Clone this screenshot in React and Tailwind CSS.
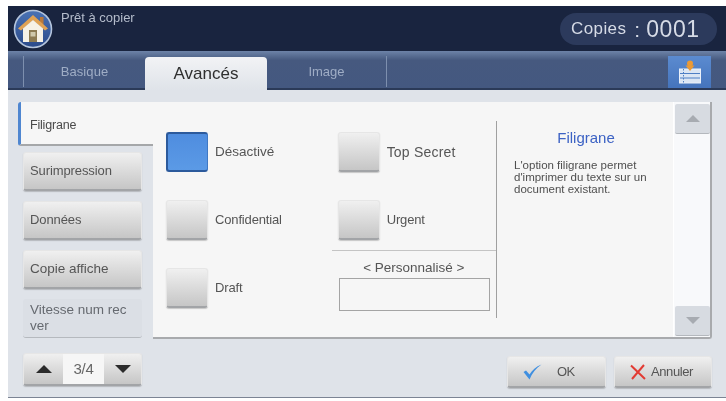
const FONT = "font-['Liberation_Sans',Arial,sans-serif]";
const btn = "bg-gradient-to-b from-[#f0f0f0] to-[#c6c6c6] border border-[#e6e6e6] border-b-[2px] border-b-[#a2a4a7] rounded-[3px] shadow-[0_1px_1px_rgba(90,90,90,0.3)]";

function Home() {
  return (
    <svg width="40" height="40" viewBox="0 0 40 40">
      <defs>
        <linearGradient id="hb" x1="0" y1="0" x2="0" y2="1">
          <stop offset="0" stopColor="#4a72b4" />
          <stop offset="1" stopColor="#2b4a8a" />
        </linearGradient>
      </defs>
      <circle cx="20" cy="20" r="18.5" fill="url(#hb)" stroke="#b4c4dc" strokeWidth="1.6" />
      <path d="M27 8h3.5v8l-3.5-3z" fill="#b9783a" />
      <path d="M20 6 L35 19.5 L32 21.5 L20 11.5 L8 21.5 L5 19.5 Z" fill="#e0a254" />
      <path d="M20 11 L30 19.5 V33 H10 V19.5 Z" fill="#f6f1e6" />
      <rect x="16" y="21" width="8" height="12" fill="#8c7a52" />
      <rect x="17.5" y="23" width="5" height="4.5" fill="#cfc8ab" />
    </svg>
  );
}

function Tray() {
  return (
    <svg width="24" height="24" viewBox="0 0 24 24">
      <rect x="1.5" y="9" width="21" height="14" fill="#dbe6f4" stroke="#eaf1fa" strokeWidth="1" />
      <path d="M2 13.5h20M2 18h20" stroke="#4f7fc4" strokeWidth="1.2" />
      <path d="M5.5 9v14" stroke="#4f7fc4" strokeWidth="1" strokeDasharray="1.5 1.5" />
      <circle cx="12" cy="3.5" r="3" fill="#eb9a35" />
      <path d="M7.5 5.5h9L12 11z" fill="#eb9a35" />
    </svg>
  );
}

function Option({ label, active, className = "", textClass = "text-[13px] tracking-[-0.15px]" }) {
  return (
    <div className={`flex items-center ${className}`}>
      <div
        className={
          active
            ? "w-[42px] h-[40px] rounded-[3px] bg-gradient-to-b from-[#4f8ddf] to-[#5b9ae6] border-[2px] border-[#2c5a9c] border-r-[#3f78c4] border-r-[1px]"
            : `w-[42px] h-[40px] ${btn}`
        }
      />
      <span className={`ml-[7px] text-[#555] ${textClass}`}>{label}</span>
    </div>
  );
}

function SideButton({ children, textClass = "text-[13px] tracking-[-0.1px]" }) {
  return (
    <div className={`w-[119px] h-[39px] flex items-center pl-[6px] text-[#555] ${textClass} ${btn}`}>
      {children}
    </div>
  );
}

export default function App() {
  return (
    <div className={`w-[726px] h-[401px] bg-white pt-[6px] pl-[8px] overflow-hidden flex flex-col [filter:blur(0.35px)] ${FONT}`}>
      {/* header */}
      <div className="h-[45px] shrink-0 bg-[#19243f] flex items-start justify-between pl-[5px] pr-[9px]">
        <div className="flex items-start pt-[3px]">
          <Home />
          <span className="ml-[8px] mt-[1px] text-[13px] leading-[16px] text-[#b4bccb]">Prêt à copier</span>
        </div>
        <div className="mt-[7px] w-[157px] h-[32px] rounded-full bg-[#2c3a5c] flex items-center pl-[11px] text-[#d6dbe6]">
          <span className="text-[17px] tracking-[0.4px]">Copies</span>
          <span className="text-[21px] ml-[8px] mr-[6px] leading-none">:</span>
          <span className="text-[23px] font-light tracking-[0.6px]">0001</span>
        </div>
      </div>

      {/* tab bar */}
      <div className="h-[39px] shrink-0 bg-gradient-to-b from-[#6d83a8] via-[#46597f] via-[25%] to-[#445880] border-b-[2px] border-b-[#2b3a58] flex items-stretch relative pt-[4px]">
        <div className="w-[16px] border-r border-r-[#7d8fae] my-[1px]" />
        <div className="w-[121px] flex items-center justify-center text-[13px] tracking-[0.1px] text-[#9fadc5]">Basique</div>
        <div className="w-[122px] -mb-[2px] mt-[2px] rounded-t-[4px] bg-gradient-to-b from-[#f2f3f5] to-[#dfe3e9] flex items-center justify-center text-[17px] text-[#2f2f2f]">
          Avancés
        </div>
        <div className="w-[119px] flex items-center justify-center text-[13px] text-[#9fadc5]">Image</div>
        <div className="border-r border-r-[#7d8fae] my-[1px]" />
        <div className="flex-1 flex justify-end pr-[15px]">
          <div className="w-[43px] h-[32px] mt-[1px] bg-gradient-to-b from-[#5b8bd0] to-[#4574bc] flex items-center justify-center">
            <Tray />
          </div>
        </div>
      </div>

      {/* body */}
      <div className="h-[308px] shrink-0 bg-[#dfe3e9] border-b border-b-[#7c8494] flex flex-col pl-[10px] pr-[14px] pt-[12px]">
        <div className="flex items-start h-[237px]">
          <div className="w-[135px] shrink-0 flex flex-col">
            <div className="h-[44px] bg-[#f6f6f6] border-l-[3px] border-l-[#4f86d0] border-b-[2px] border-b-[#a5a7a9] rounded-l-[3px] flex items-center pl-[9px] pt-[5px] text-[12.5px] tracking-[-0.2px] text-[#4a4a4a]">
              Filigrane
            </div>
            <div className="ml-[5px] mt-[6px] flex flex-col gap-[10px]">
              <SideButton>Surimpression</SideButton>
              <SideButton>Données</SideButton>
              <SideButton textClass="text-[13.5px]">Copie affiche</SideButton>
              <div className="w-[119px] h-[39px] bg-[#dbdfe5] border-b border-b-[#b5b9be] rounded-[3px] pl-[7px] pt-[3px] text-[13.5px] leading-[16px] text-[#666a70]">
                Vitesse num rec ver
              </div>
            </div>
          </div>

          {/* panel */}
          <div className="w-[559px] h-[237px] bg-[#f6f6f6] border-r-[2px] border-r-[#a8aaad] border-b-[2px] border-b-[#a8aaad] rounded-br-[3px] flex">
            <div className="w-[343px] shrink-0 relative flex pt-[30px]">
              <div className="ml-[13px] w-[131px] flex flex-col gap-[28px]">
                <Option label="Désactivé" active textClass="text-[13.5px] tracking-[0px]" />
                <Option label="Confidential" />
                <Option label="Draft" />
              </div>
              <div className="ml-[42px] w-[160px] flex flex-col">
                <Option label="Top Secret" textClass="text-[14px] tracking-[0.2px]" />
                <Option label="Urgent" className="mt-[28px]" />
                <div className="-ml-[6px] mt-[10px] border-t border-t-[#c4c4c4] pt-[9px] flex flex-col items-center">
                  <span className="text-[13.5px] tracking-[0px] text-[#555] leading-[15px]">&lt; Personnalisé &gt;</span>
                  <div className="mt-[3px] ml-[2px] w-[151px] h-[33px] border border-[#a4a4a4] bg-[#f6f6f6]" />
                </div>
              </div>
            </div>
            <div className="mt-[19px] h-[197px] border-l border-l-[#a0a0a0]" />
            <div className="w-[176px] shrink-0 flex flex-col pt-[27px]">
              <div className="text-center text-[15px] leading-[17px] text-[#3c62c4] pl-[2px]">Filigrane</div>
              <p className="ml-[17px] mt-[13px] w-[150px] text-[11.5px] leading-[12px] text-[#4f4f4f]">
                L'option filigrane permet d'imprimer du texte sur un document existant.
              </p>
            </div>
            <div className="flex-1 border-l border-l-[#ffffff] flex flex-col justify-between items-center bg-[#f8f9fb] pt-[2px] pb-[1px] pl-[1px]">
              <div className="w-[35px] h-[30px] bg-[#d7dbe1] border-b border-b-[#b4b8bd] rounded-[2px] flex items-center justify-center">
                <div className="w-0 h-0 border-l-[7px] border-r-[7px] border-b-[7px] border-l-transparent border-r-transparent border-b-[#a7abb1]" />
              </div>
              <div className="w-[35px] h-[30px] bg-[#d7dbe1] border-b border-b-[#b4b8bd] rounded-[2px] flex items-center justify-center">
                <div className="w-0 h-0 border-l-[7px] border-r-[7px] border-t-[7px] border-l-transparent border-r-transparent border-t-[#a7abb1]" />
              </div>
            </div>
          </div>
        </div>

        {/* footer */}
        <div className="flex justify-between items-start pl-[5px] mt-[14px]">
          <div className={`w-[119px] h-[33px] flex items-stretch ${btn} overflow-hidden`}>
            <div className="w-[39px] flex items-center justify-center">
              <div className="w-0 h-0 border-l-[8px] border-r-[8px] border-b-[8px] border-l-transparent border-r-transparent border-b-[#2b2b2b]" />
            </div>
            <div className="w-[41px] bg-[#f6f6f6] flex items-center justify-center text-[15px] tracking-[-0.3px] text-[#666]">3/4</div>
            <div className="flex-1 flex items-center justify-center">
              <div className="w-0 h-0 border-l-[8px] border-r-[8px] border-t-[8px] border-l-transparent border-r-transparent border-t-[#2b2b2b]" />
            </div>
          </div>
          <div className="flex gap-[8px] mt-[3px]">
            <div className={`w-[99px] h-[32px] flex items-center pl-[14px] ${btn}`}>
              <svg width="20" height="18" viewBox="0 0 20 18">
                <path d="M1.5 9 L7.5 16.5 C10 10.5 14 5 19.5 1.5 C14 3.5 10 7.5 7.5 11.5 L4 7.5 Z" fill="#3f8fe0" />
              </svg>
              <span className="ml-[15px] text-[13px] tracking-[-0.5px] text-[#555]">OK</span>
            </div>
            <div className={`w-[98px] h-[32px] flex items-center pl-[15px] ${btn}`}>
              <svg width="16" height="16" viewBox="0 0 16 16">
                <path d="M1 1.5 L15 15 M14 1 L2 15" stroke="#e23b33" strokeWidth="2" />
              </svg>
              <span className="ml-[5px] text-[13px] tracking-[-0.4px] text-[#555]">Annuler</span>
            </div>
          </div>
        </div>
      </div>
    </div>
  );
}
